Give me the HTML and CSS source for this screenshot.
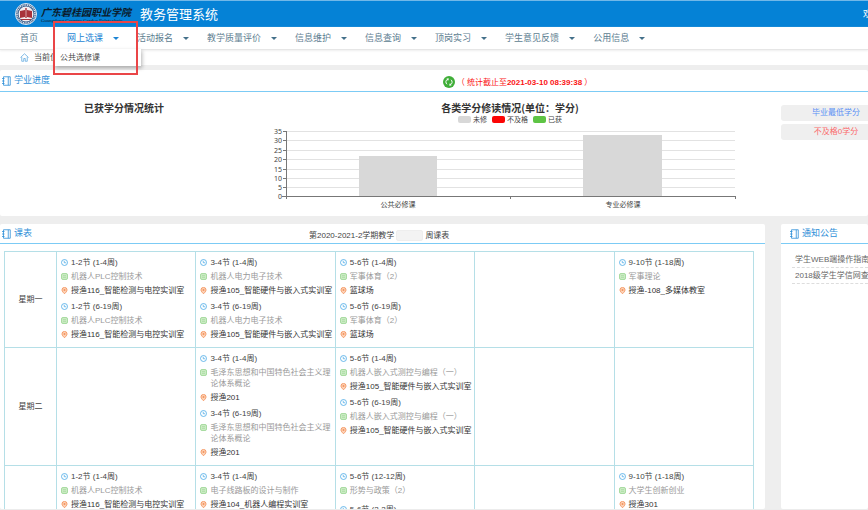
FILE: index.html
```html
<!DOCTYPE html>
<html lang="zh-CN">
<head>
    <meta charset="UTF-8">
    <meta name="viewport" content="width=device-width, initial-scale=1.0">
    <title>教务管理系统</title>
    <link rel="stylesheet" href="styles.css">
</head>
<body>
    <svg class="sprite" aria-hidden="true">
        <symbol id="book" viewBox="0 0 18 20">
            <path d="M3 1.500h13.500v17H3zM12.500 1.500v17" fill="none" stroke="currentColor" stroke-width="1.600"/>
            <path d="M0 5h5M0 10h5M0 15h5" stroke="currentColor" stroke-width="1.600"/>
        </symbol>
        <symbol id="clock" viewBox="0 0 14 14">
            <circle cx="7" cy="7" r="6" fill="none" stroke="#4aa9e6" stroke-width="1.6"/>
            <path d="M6.5 3.5v4h4" fill="none" stroke="#4aa9e6" stroke-width="1.5"/>
        </symbol>
        <symbol id="course" viewBox="0 0 14 14">
            <rect x="1.5" y="1.5" width="11" height="11" rx="1" fill="#dff3d9" stroke="#8fd186" stroke-width="2"/>
            <path d="M4 5.5h6M4 8.5h6" stroke="#8fd186" stroke-width="1.5"/>
        </symbol>
        <symbol id="pin" viewBox="0 0 14 14">
            <path d="M7 13.5C4 10.500 2 8.500 2 5.800a5 5 0 0 1 10 0C12 8.500 10 10.500 7 13.500z" fill="#fcd3b8" stroke="#f4935c" stroke-width="1.800"/>
            <circle cx="7" cy="6" r="2" fill="#f4935c"/>
        </symbol>
    </svg>

    <header class="header">
        <svg class="logo" viewBox="0 0 24 24">
            <circle cx="12" cy="12" r="10.500" fill="#3b5f8c" stroke="#dbe7f2" stroke-width="1"/>
            <circle cx="12" cy="12" r="9" fill="none" stroke="#dfe8f0" stroke-width="1.500" stroke-dasharray="1 .8"/>
            <circle cx="12" cy="12" r="7.500" fill="#f3eef0"/>
            <path d="M6 9l5-1v7l-5 1zM18 9l-5-1v7l5 1zM11.300 6h1.400v10h-1.400z" fill="#a8323a"/>
            <path d="M7 17.500h10" stroke="#a8323a"/>
        </svg>
        <div class="school">
            <span class="school-name">广东碧桂园职业学院</span>
            <span class="school-en">Guangdong Country Garden Polytechnic</span>
        </div>
        <h1>教务管理系统</h1>
        <span class="welcome">欢迎您</span>
    </header>

    <nav class="nav">
        <a href="#" class="home">首页</a>
        <div class="nav-item">
            <a href="#" class="active caret">网上选课</a>
            <div class="submenu"><a href="#">公共选修课</a></div>
            <div class="mark"></div>
        </div>
        <a href="#" class="caret">活动报名</a>
        <a href="#" class="caret">教学质量评价</a>
        <a href="#" class="caret">信息维护</a>
        <a href="#" class="caret">信息查询</a>
        <a href="#" class="caret">顶岗实习</a>
        <a href="#" class="caret">学生意见反馈</a>
        <a href="#" class="caret">公用信息</a>
    </nav>

    <div class="crumb">
        <svg class="crumb-icon" viewBox="0 0 18 18" fill="none" stroke="#5aa6de" stroke-width="1.500">
            <path d="M1 9l8-7.500L17 9M3.500 8v8.500h4V11h3v5.500h4V8"/>
        </svg>
        <span>当前位置</span>
    </div>

    <main>
        <section class="panel">
            <div class="panel-head progress-head">
                <h2><svg class="book"><use href="#book"/></svg>学业进度</h2>
                <div class="deadline">
                    <svg class="refresh" viewBox="0 0 24 24">
                        <circle cx="12" cy="12" r="12" fill="#3fae38"/>
                        <path d="M8 16.500a6 6 0 0 1 1-10M16 7.500a6 6 0 0 1-1 10" fill="none" stroke="#fff" stroke-width="2"/>
                        <path d="M7 5l5 0-2 5zM17 19l-5 0 2-5z" fill="#fff"/>
                    </svg>
                    <span>（ 统计截止至<b>2021-03-10 08:39:38</b> ）</span>
                </div>
            </div>
            <div class="progress">
                <h3>已获学分情况统计</h3>
                <div class="chart">
                    <h3>各类学分修读情况(单位：学分)</h3>
                    <ul class="legend">
                        <li class="unread">未修</li>
                        <li class="failed">不及格</li>
                        <li class="earned">已获</li>
                    </ul>
                    <svg class="plot" viewBox="0 0 524 88">
                        <path class="grid" d="M39 6.500h448M39 15.500h448M39 25.500h448M39 34.500h448M39 44.500h448M39 53.500h448M39 62.500h448"/>
                        <rect class="bar" x="111" y="31" width="78" height="41"/>
                        <rect class="bar" x="335" y="10" width="79" height="62"/>
                        <path class="axis" d="M38.500 6v68M34 71.500h454M262.500 72v2M487.500 72v2M35 6.500h4M35 15.500h4M35 25.500h4M35 34.500h4M35 44.500h4M35 53.500h4M35 62.500h4"/>
                        <g class="y-labels">
                            <text x="34" y="9">35</text>
                            <text x="34" y="18">30</text>
                            <text x="34" y="28">25</text>
                            <text x="34" y="37">20</text>
                            <text x="34" y="47">15</text>
                            <text x="34" y="56">10</text>
                            <text x="34" y="65">5</text>
                            <text x="34" y="74">0</text>
                        </g>
                        <g class="x-labels">
                            <text x="150" y="82">公共必修课</text>
                            <text x="375" y="82">专业必修课</text>
                        </g>
                    </svg>
                </div>
                <div class="credits">
                    <div class="credit total">毕业最低学分</div>
                    <div class="credit fail">不及格0学分</div>
                </div>
            </div>
        </section>

        <div class="row">
            <section class="panel schedule">
                <div class="panel-head schedule-head">
                    <h2><svg class="book"><use href="#book"/></svg>课表</h2>
                    <div class="term">
                        <label for="week">第2020-2021-2学期教学</label>
                        <select id="week" disabled><option></option></select>
                        <span>周课表</span>
                    </div>
                </div>
                <table>
                    <tr>
                        <th scope="row">星期一</th>
                        <td>
                            <div class="lesson">
                                <p class="time"><svg><use href="#clock"/></svg>1-2节 (1-4周)</p>
                                <p class="course"><svg><use href="#course"/></svg>机器人PLC控制技术</p>
                                <p class="room"><svg><use href="#pin"/></svg>授渔116_智能检测与电控实训室</p>
                            </div>
                            <div class="lesson">
                                <p class="time"><svg><use href="#clock"/></svg>1-2节 (6-19周)</p>
                                <p class="course"><svg><use href="#course"/></svg>机器人PLC控制技术</p>
                                <p class="room"><svg><use href="#pin"/></svg>授渔116_智能检测与电控实训室</p>
                            </div>
                        </td>
                        <td>
                            <div class="lesson">
                                <p class="time"><svg><use href="#clock"/></svg>3-4节 (1-4周)</p>
                                <p class="course"><svg><use href="#course"/></svg>机器人电力电子技术</p>
                                <p class="room"><svg><use href="#pin"/></svg>授渔105_智能硬件与嵌入式实训室</p>
                            </div>
                            <div class="lesson">
                                <p class="time"><svg><use href="#clock"/></svg>3-4节 (6-19周)</p>
                                <p class="course"><svg><use href="#course"/></svg>机器人电力电子技术</p>
                                <p class="room"><svg><use href="#pin"/></svg>授渔105_智能硬件与嵌入式实训室</p>
                            </div>
                        </td>
                        <td>
                            <div class="lesson">
                                <p class="time"><svg><use href="#clock"/></svg>5-6节 (1-4周)</p>
                                <p class="course"><svg><use href="#course"/></svg>军事体育（2）</p>
                                <p class="room"><svg><use href="#pin"/></svg>篮球场</p>
                            </div>
                            <div class="lesson">
                                <p class="time"><svg><use href="#clock"/></svg>5-6节 (6-19周)</p>
                                <p class="course"><svg><use href="#course"/></svg>军事体育（2）</p>
                                <p class="room"><svg><use href="#pin"/></svg>篮球场</p>
                            </div>
                        </td>
                        <td></td>
                        <td>
                            <div class="lesson">
                                <p class="time"><svg><use href="#clock"/></svg>9-10节 (1-18周)</p>
                                <p class="course"><svg><use href="#course"/></svg>军事理论</p>
                                <p class="room"><svg><use href="#pin"/></svg>授渔-108_多媒体教室</p>
                            </div>
                        </td>
                    </tr>
                    <tr>
                        <th scope="row">星期二</th>
                        <td></td>
                        <td>
                            <div class="lesson">
                                <p class="time"><svg><use href="#clock"/></svg>3-4节 (1-4周)</p>
                                <p class="course"><svg><use href="#course"/></svg>毛泽东思想和中国特色社会主义理论体系概论</p>
                                <p class="room"><svg><use href="#pin"/></svg>授渔201</p>
                            </div>
                            <div class="lesson">
                                <p class="time"><svg><use href="#clock"/></svg>3-4节 (6-19周)</p>
                                <p class="course"><svg><use href="#course"/></svg>毛泽东思想和中国特色社会主义理论体系概论</p>
                                <p class="room"><svg><use href="#pin"/></svg>授渔201</p>
                            </div>
                        </td>
                        <td>
                            <div class="lesson">
                                <p class="time"><svg><use href="#clock"/></svg>5-6节 (1-4周)</p>
                                <p class="course"><svg><use href="#course"/></svg>机器人嵌入式测控与编程（一）</p>
                                <p class="room"><svg><use href="#pin"/></svg>授渔105_智能硬件与嵌入式实训室</p>
                            </div>
                            <div class="lesson">
                                <p class="time"><svg><use href="#clock"/></svg>5-6节 (6-19周)</p>
                                <p class="course"><svg><use href="#course"/></svg>机器人嵌入式测控与编程（一）</p>
                                <p class="room"><svg><use href="#pin"/></svg>授渔105_智能硬件与嵌入式实训室</p>
                            </div>
                        </td>
                        <td></td>
                        <td></td>
                    </tr>
                    <tr>
                        <th scope="row"></th>
                        <td>
                            <div class="lesson">
                                <p class="time"><svg><use href="#clock"/></svg>1-2节 (1-4周)</p>
                                <p class="course"><svg><use href="#course"/></svg>机器人PLC控制技术</p>
                                <p class="room"><svg><use href="#pin"/></svg>授渔116_智能检测与电控实训室</p>
                            </div>
                        </td>
                        <td>
                            <div class="lesson">
                                <p class="time"><svg><use href="#clock"/></svg>3-4节 (1-4周)</p>
                                <p class="course"><svg><use href="#course"/></svg>电子线路板的设计与制作</p>
                                <p class="room"><svg><use href="#pin"/></svg>授渔104_机器人编程实训室</p>
                            </div>
                        </td>
                        <td>
                            <div class="lesson">
                                <p class="time"><svg><use href="#clock"/></svg>5-6节 (12-12周)</p>
                                <p class="course"><svg><use href="#course"/></svg>形势与政策（2）</p>
                                <p class="room"></p>
                            </div>
                            <div class="lesson">
                                <p class="time"><svg><use href="#clock"/></svg>5-6节 (2-2周)</p>
                            </div>
                        </td>
                        <td></td>
                        <td>
                            <div class="lesson">
                                <p class="time"><svg><use href="#clock"/></svg>9-10节 (1-18周)</p>
                                <p class="course"><svg><use href="#course"/></svg>大学生创新创业</p>
                                <p class="room"><svg><use href="#pin"/></svg>授渔301</p>
                            </div>
                        </td>
                    </tr>
                </table>
            </section>

            <aside class="panel notices">
                <div class="panel-head">
                    <h2><svg class="book"><use href="#book"/></svg>通知公告</h2>
                </div>
                <ul>
                    <li><a href="#">学生WEB端操作指南</a></li>
                    <li><a href="#">2018级学生学信网查询</a></li>
                </ul>
            </aside>
        </div>
    </main>
</body>
</html>
```
FILE: styles.css
```css
* {
    box-sizing: border-box;
}
body {
    font-family: "Liberation Sans", "Noto Sans CJK SC", sans-serif;
    font-size: 8px;
    line-height: 11px;
    color: #444;
    margin: 0;
    height: 100vh;
    display: flex;
    flex-direction: column;
    overflow: hidden;
    background-color: #fff;
    border-bottom: 1px solid #ececec;
}
h1, h2, h3, p, ul {
    margin: 0;
    padding: 0;
}
ul {
    list-style: none;
}
a {
    color: inherit;
    text-decoration: none;
}
svg {
    flex: none;
}
.sprite {
    position: absolute;
    width: 0;
    height: 0;
}

/* header */
.header {
    display: flex;
    align-items: center;
    flex: none;
    height: 27px;
    padding-left: 14px;
    background-color: #0582d6;
    border-top: 1px solid #72b8e8;
    overflow: hidden;
    white-space: nowrap;
}
.logo {
    width: 24px;
    height: 24px;
}
.school {
    display: flex;
    flex-direction: column;
    width: 102px;
    padding: 2px 0 0 3px;
    color: #0b1a2b;
}
.school-name {
    font-family: "Noto Sans CJK SC", serif;
    font-size: 10px;
    font-style: italic;
    font-weight: bold;
    line-height: 12px;
}
.school-en {
    font-family: "Liberation Serif", serif;
    font-size: 5px;
    line-height: 6px;
}
.header h1 {
    flex: 1;
    font-family: "Noto Sans CJK SC", sans-serif;
    font-size: 13px;
    font-weight: normal;
    line-height: 18px;
    color: #fff;
}
.welcome {
    width: 5px;
    font-size: 9px;
    color: #fff;
}

/* nav */
.nav {
    display: flex;
    align-items: center;
    flex: none;
    height: 23px;
    padding-left: 20px;
    font-size: 9px;
    line-height: 22px;
    color: #5c7d90;
    white-space: nowrap;
    border-bottom: 1px solid #e6e6e6;
    box-shadow: 0 1px 2px #eee;
}
.home {
    margin-right: 29px;
}
.nav-item {
    position: relative;
}
.caret {
    display: flex;
    align-items: center;
    margin-right: 18px;
}
.caret::after {
    content: "";
    margin-left: 10px;
    border: 3px solid transparent;
    border-top-color: #44708a;
    border-bottom: 0;
}
.active {
    color: #1c84d4;
}
.active::after {
    border-top-color: #1c84d4;
}
.submenu {
    position: absolute;
    top: 22px;
    left: -13px;
    z-index: 1;
    width: 87px;
    padding-left: 6px;
    background-color: #fff;
    box-shadow: 1px 2px 4px rgba(0, 0, 0, 0.3);
    font-size: 8px;
    line-height: 17px;
    color: #444;
}
.mark {
    position: absolute;
    top: -6px;
    left: -14px;
    z-index: 2;
    width: 85px;
    height: 54px;
    border: 2px solid #ea4547;
    pointer-events: none;
}
.crumb {
    display: flex;
    align-items: center;
    flex: none;
    gap: 5px;
    height: 15px;
    padding-left: 20px;
}
.crumb-icon {
    width: 9px;
    height: 9px;
}

/* panels */
main {
    flex: 1;
    min-height: 0;
    padding-top: 5px;
    display: flex;
    flex-direction: column;
    gap: 8px;
    overflow: hidden;
    background-color: #eee;
}
.panel {
    flex: none;
    background-color: #fff;
    border-radius: 2px;
}
.panel-head {
    display: grid;
    align-items: center;
    height: 20px;
    border-bottom: 1px solid #7ccbf5;
}
.panel-head h2 {
    display: flex;
    align-items: center;
    gap: 3px;
    padding-left: 2px;
    font-size: 9px;
    font-weight: normal;
    color: #2f8fd8;
    white-space: nowrap;
}
.book {
    width: 9px;
    height: 10px;
}
.progress-head {
    grid-template-columns: 51% 1fr;
    height: 22px;
}
.deadline {
    display: flex;
    align-items: center;
    gap: 2px;
    padding-top: 3px;
    color: #fb1414;
    white-space: nowrap;
}
.refresh {
    width: 12px;
    height: 12px;
}

/* progress */
.progress {
    display: grid;
    grid-template-columns: 248px 1fr 87px;
    padding: 9px 0 3px;
}
.progress h3 {
    font-family: "Noto Sans CJK SC", sans-serif;
    font-size: 10px;
    line-height: 13px;
    color: #333;
    text-align: center;
}
.chart {
    padding-right: 9px;
}
.legend {
    display: flex;
    justify-content: center;
    gap: 5px;
    font-size: 7px;
    line-height: 11px;
}
.legend li {
    display: flex;
    align-items: center;
    gap: 2px;
}
.legend li::before {
    content: "";
    width: 13px;
    height: 7px;
    border-radius: 2px;
    background-color: #d8d8d8;
}
.legend .failed::before {
    background-color: #fb0505;
}
.legend .earned::before {
    background-color: #5ec445;
}
.plot {
    display: block;
    width: 100%;
    font-family: "Noto Sans", "Noto Sans CJK SC", sans-serif;
    font-size: 7px;
    fill: #444;
}
.grid {
    stroke: #e2e2e2;
}
.axis {
    fill: none;
    stroke: #777;
}
.bar {
    fill: #d8d8d8;
}
.y-labels {
    text-anchor: end;
}
.x-labels {
    text-anchor: middle;
}
.credits {
    overflow: hidden;
    padding-top: 4px;
}
.credit {
    width: 110px;
    margin-bottom: 3px;
    background-color: #efefef;
    border-radius: 3px;
    line-height: 16px;
    text-align: center;
}
.total {
    color: #5a8ff5;
}
.fail {
    color: #fb6a6a;
}

/* timetable */
.row {
    display: flex;
    flex: 1;
    gap: 16px;
    min-height: 0;
}
.schedule {
    flex: 1;
    min-width: 0;
    overflow: hidden;
}
.schedule-head {
    grid-template-columns: 40% 1fr;
}
.term {
    display: flex;
    align-items: center;
    gap: 2px;
    padding: 4px 0 0 3px;
}
.term select {
    appearance: none;
    width: 27px;
    height: 11px;
    padding: 0;
    border: 1px solid #e8e8e8;
    border-radius: 2px;
    background-color: #eee;
}
table {
    width: calc(100% - 15px);
    margin: 7px 11px 0 4px;
    table-layout: fixed;
    border-collapse: collapse;
}
th, td {
    border: 1px solid #b5dfe7;
}
th {
    width: 52px;
    padding: 0;
    font-weight: normal;
    text-align: center;
}
td {
    padding: 4px 0 3px 4px;
    vertical-align: top;
}
.lesson {
    margin-bottom: 2px;
}
.lesson p {
    display: flex;
    gap: 3px;
    padding: 1px 0 2px;
}
.lesson svg {
    width: 7px;
    height: 7px;
    margin-top: 2px;
}
.course {
    color: #999;
}
.room {
    color: #333;
    white-space: nowrap;
}

/* notices */
.notices {
    width: 87px;
    overflow: hidden;
    white-space: nowrap;
}
.notices h2 {
    padding-left: 9px;
}
.notices ul {
    padding: 8px 0 0 11px;
}
.notices li {
    padding-left: 3px;
    line-height: 15px;
    color: #666;
    border-bottom: 1px dashed #ddd;
}
```
